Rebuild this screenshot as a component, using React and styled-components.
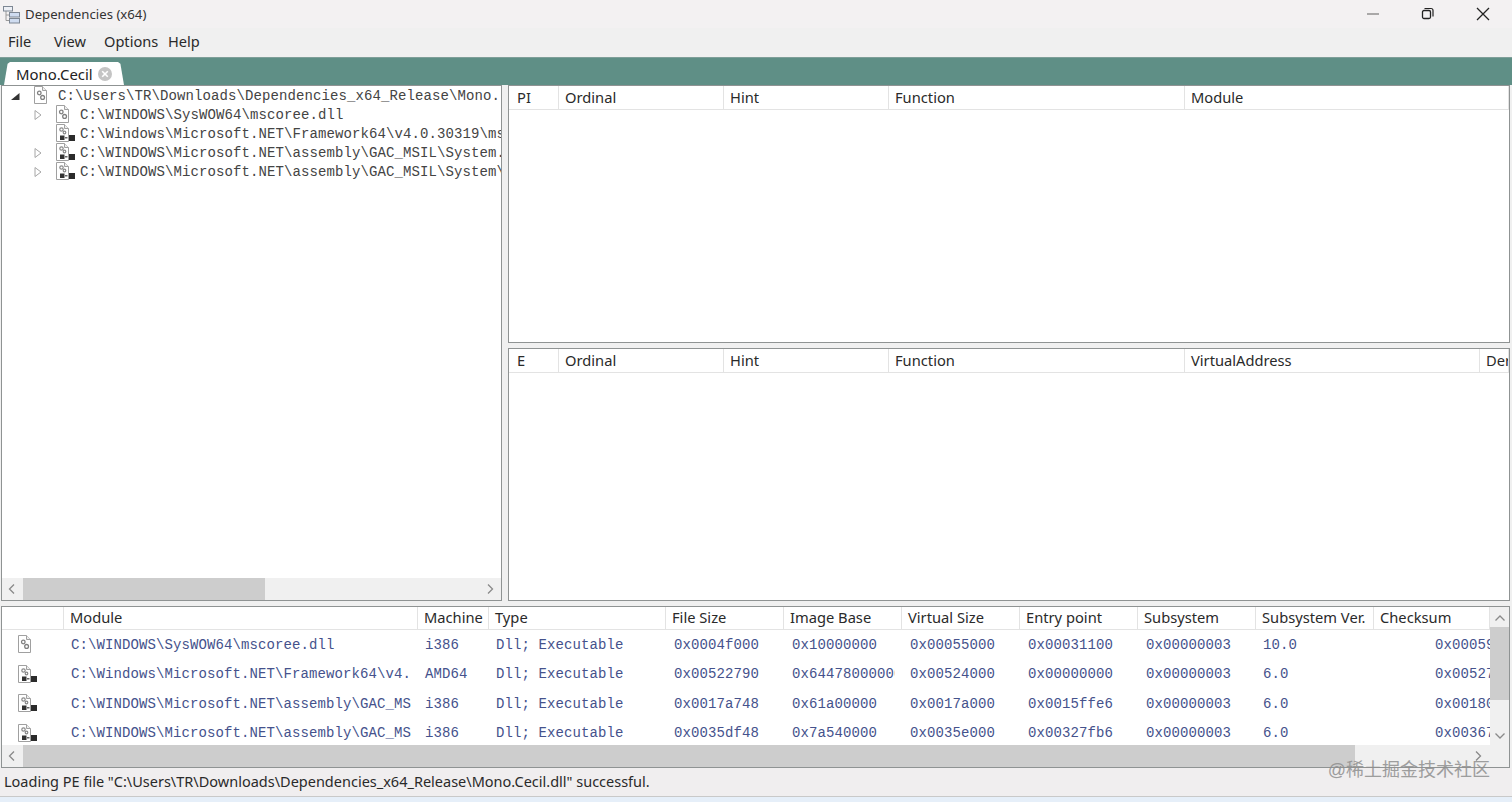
import React from "react";
import styled, { createGlobalStyle } from "styled-components";

const GlobalStyle = createGlobalStyle`
  html, body {
    margin: 0;
    padding: 0;
    width: 1512px;
    height: 802px;
    overflow: hidden;
    background: #f0f0f0;
    font-family: "Noto Sans", "Open Sans", sans-serif;
    color: #1e1e1e;
  }
`;

const Window = styled.div`
  width: 1512px;
  height: 802px;
  display: flex;
  flex-direction: column;
  position: relative;
  background: #f0f0f0;
`;

const TitleBar = styled.div`
  height: 28px;
  display: flex;
  align-items: center;
  padding-left: 2px;
  gap: 4px;
  background: #f3f1f2;
`;
const AppTitle = styled.div`
  flex: 1;
  font-size: 13.2px;
  color: #333;
`;
const WindowButtons = styled.div`
  display: flex;
  align-items: center;
  gap: 35px;
  padding-right: 19px;
`;
const WindowButton = styled.svg`
  width: 20px;
  height: 14px;
  display: block;
`;

const MenuBar = styled.div`
  height: 29px;
  box-sizing: border-box;
  padding: 0 0 4px 8px;
  display: flex;
  align-items: center;
  font-size: 14.6px;
  background: #f0f0f0;
  color: #2a2a2a;
`;
const MenuItem = styled.div`
  width: ${(p) => p.$width}px;
`;

const TabStrip = styled.div`
  height: 28px;
  background: #5f8f86;
  border-top: 1px solid #7f9f99;
  box-sizing: border-box;
  display: flex;
  align-items: flex-end;
  padding-left: 4px;
`;
const Tab = styled.div`
  width: 120px;
  height: 23px;
  box-sizing: border-box;
  background: #fff;
  border-radius: 5px 5px 0 0;
  clip-path: polygon(0 100%, 3% 8%, 5% 0, 95% 0, 97% 8%, 100% 100%);
  display: flex;
  align-items: center;
  padding-left: 12px;
  gap: 5px;
  font-size: 14.9px;
  color: #222;
`;
const TabClose = styled.svg`
  width: 14px;
  height: 14px;
  display: block;
`;

const Content = styled.div`
  height: 683px;
  display: flex;
  flex-direction: column;
  gap: 5px;
  padding: 0 2px 0 2px;
  box-sizing: border-box;
  background: #f0f0f0;
`;
const UpperArea = styled.div`
  height: 516px;
  display: flex;
  gap: 6px;
`;
const Pane = styled.div`
  box-sizing: border-box;
  background: #fff;
  border: 1px solid #8f9393;
  display: flex;
  flex-direction: column;
  overflow: hidden;
`;
const TreePane = styled(Pane)`
  width: 501px;
  margin-left: -1px;
`;
const RightColumn = styled.div`
  flex: 1;
  display: flex;
  flex-direction: column;
  gap: 5px;
  min-width: 0;
`;
const ImportsPane = styled(Pane)`
  height: 258px;
`;
const ExportsPane = styled(Pane)`
  flex: 1;
`;
const ModulesPane = styled(Pane)`
  flex: 1;
  margin-left: -1px;
  position: relative;
`;

const TreeBody = styled.div`
  flex: 1;
  overflow: hidden;
`;
const TreeRow = styled.div`
  height: 19px;
  display: flex;
  align-items: center;
  padding-left: ${(p) => p.$indent}px;
  white-space: nowrap;
  overflow: hidden;
`;
const Arrow = styled.svg`
  width: 12px;
  height: 12px;
  flex: none;
  display: block;
`;
const ArrowSlot = styled.div`
  width: 12px;
  flex: none;
`;
const FileIcon = styled.svg`
  flex: none;
  display: block;
  width: 20px;
  height: 19px;
  margin-left: ${(p) => p.$gap || 0}px;
`;
const PathText = styled.span`
  font-family: "Liberation Mono", monospace;
  font-size: 14px;
  letter-spacing: 0.1px;
  color: #444;
  margin-left: ${(p) => p.$gap}px;
`;

const HeaderRow = styled.div`
  height: ${(p) => p.$height}px;
  line-height: ${(p) => p.$height - 2}px;
  flex: none;
  display: grid;
  grid-template-columns: ${(p) => p.$columns};
  border-bottom: 1px solid #e3e3e3;
  box-sizing: border-box;
  background: #fff;
  overflow: hidden;
`;
const HeaderCell = styled.div`
  font-size: 14.7px;
  padding-left: ${(p) => (p.$wide ? 6 : 8)}px;
  color: #2a2a2a;
  border-right: 1px solid #e3e3e3;
  white-space: nowrap;
  overflow: hidden;
  box-sizing: border-box;
`;

const ModulesMain = styled.div`
  flex: 1;
  display: flex;
  min-height: 0;
`;
const ModulesTable = styled.div`
  flex: 1;
  min-width: 0;
  display: flex;
  flex-direction: column;
  overflow: hidden;
`;
const DataRow = styled.div`
  height: 29.5px;
  flex: none;
  display: grid;
  grid-template-columns: ${(p) => p.$columns};
  align-items: center;
`;
const DataCell = styled.div`
  font-family: "Liberation Mono", monospace;
  font-size: 14px;
  letter-spacing: 0.1px;
  color: #45528c;
  padding-left: ${(p) => (p.$tight ? 7 : 8)}px;
  white-space: nowrap;
  overflow: hidden;
  box-sizing: border-box;
`;
const ClippedCell = styled(DataCell)`
  margin-right: 7px;
`;
const ChecksumCell = styled(DataCell)`
  padding-left: 61px;
`;
const IconCell = styled.div`
  display: flex;
  justify-content: center;
  padding-right: 12px;
`;

const HScroll = styled.div`
  height: 22px;
  flex: none;
  background: #f0f0f0;
  position: relative;
`;
const HThumb = styled.div`
  position: absolute;
  left: ${(p) => p.$left}px;
  top: 0;
  bottom: 0;
  width: ${(p) => p.$width}px;
  background: #cdcdcd;
`;
const ScrollArrow = styled.svg`
  width: 10px;
  height: 12px;
  display: block;
  position: absolute;
  top: 5px;
  ${(p) => (p.$right ? `right: ${p.$right}px;` : `left: ${p.$left}px;`)}
`;
const VScroll = styled.div`
  width: 19px;
  flex: none;
  background: #f0f0f0;
  position: relative;
`;
const VThumb = styled.div`
  position: absolute;
  left: 0;
  right: 0;
  top: 20px;
  height: 73px;
  background: #cdcdcd;
`;
const VArrow = styled.svg`
  position: absolute;
  left: 4px;
  width: 12px;
  height: 10px;
  display: block;
  ${(p) => (p.$down ? "bottom: 4px;" : "top: 6px;")}
`;

const StatusBar = styled.div`
  height: 28px;
  box-sizing: border-box;
  padding: 0 0 3px 4px;
  display: flex;
  align-items: center;
  font-size: 14.5px;
  color: #2a2a2a;
  background: #f0eeef;
`;
const Watermark = styled.div`
  position: absolute;
  right: 22px;
  top: 755px;
  font-family: "Liberation Sans", "Noto Sans CJK SC", sans-serif;
  font-size: 18px;
  color: #8f8f8f;
  opacity: 0.85;
`;
const Taskbar = styled.div`
  flex: 1;
  background: #e6eff9;
  border-top: 1px solid #c9c9c9;
`;

const Doc = ({ linked }) => (
  <>
    <path d="M1.5 0.5 H9.5 L13.5 4.5 V17.5 H1.5 Z" fill="#fff" stroke="#a0a0a0" />
    <path d="M9.5 0.5 V4.5 H13.5" fill="#eee" stroke="#a0a0a0" />
    {linked ? (
      <>
        <g fill="none" stroke="#8a8a8a" strokeWidth="1.2">
          <circle cx="6.5" cy="5.5" r="1.7" />
          <circle cx="9.5" cy="8.5" r="1.3" />
        </g>
        <rect x="5" y="11.5" width="4.5" height="4.5" fill="#333" />
        <path d="M10 13 h2.5 v1.5 h-2.5 Z" fill="#666" />
        <rect x="14" y="11" width="6" height="6" fill="#2b2b2b" />
      </>
    ) : (
      <g fill="none" stroke="#808080" strokeWidth="1.3">
        <circle cx="6.3" cy="7" r="1.8" />
        <circle cx="9.6" cy="11.4" r="1.9" />
      </g>
    )}
  </>
);

const ModuleIcon = ({ linked, gap }) => (
  <FileIcon viewBox="0 0 20 19" $gap={gap}>
    <Doc linked={linked} />
  </FileIcon>
);

const CollapsedArrow = () => (
  <Arrow viewBox="0 0 12 12">
    <path d="M3 1.5 L9 6 L3 10.5 Z" fill="#fff" stroke="#a6a6a6" />
  </Arrow>
);
const ExpandedArrow = () => (
  <Arrow viewBox="0 0 12 12">
    <path d="M10.5 3 V10 H2 Z" fill="#333" />
  </Arrow>
);

const ChevronLeft = ({ left }) => (
  <ScrollArrow viewBox="0 0 10 12" $left={left}>
    <path d="M7 1.5 L2.5 6 L7 10.5" fill="none" stroke="#8a8a8a" strokeWidth="1.3" />
  </ScrollArrow>
);
const ChevronRight = ({ right }) => (
  <ScrollArrow viewBox="0 0 10 12" $right={right}>
    <path d="M3 1.5 L7.5 6 L3 10.5" fill="none" stroke="#8a8a8a" strokeWidth="1.3" />
  </ScrollArrow>
);

const treeChildren = [
  { path: "C:\\WINDOWS\\SysWOW64\\mscoree.dll", arrow: true },
  { path: "C:\\Windows\\Microsoft.NET\\Framework64\\v4.0.30319\\ms", linked: true },
  { path: "C:\\WINDOWS\\Microsoft.NET\\assembly\\GAC_MSIL\\System.", arrow: true, linked: true },
  { path: "C:\\WINDOWS\\Microsoft.NET\\assembly\\GAC_MSIL\\System\\", arrow: true, linked: true },
];

const IMPORT_COLUMNS = "50px 165px 165px 296px 1fr";
const EXPORT_COLUMNS = "50px 165px 165px 296px 295px 1fr";
const MODULE_COLUMNS =
  "62px 354px 71px 177px 118px 118px 118px 118px 118px 118px 116px";

const moduleRows = [
  ["C:\\WINDOWS\\SysWOW64\\mscoree.dll", "i386", "0x0004f000", "0x10000000", "0x00055000", "0x00031100", "10.0", "0x00059"],
  ["C:\\Windows\\Microsoft.NET\\Framework64\\v4.", "AMD64", "0x00522790", "0x644780000000", "0x00524000", "0x00000000", "6.0", "0x00527"],
  ["C:\\WINDOWS\\Microsoft.NET\\assembly\\GAC_MS", "i386", "0x0017a748", "0x61a00000", "0x0017a000", "0x0015ffe6", "6.0", "0x00180"],
  ["C:\\WINDOWS\\Microsoft.NET\\assembly\\GAC_MS", "i386", "0x0035df48", "0x7a540000", "0x0035e000", "0x00327fb6", "6.0", "0x00367"],
];

const moduleHeaders = [
  "",
  "Module",
  "Machine",
  "Type",
  "File Size",
  "Image Base",
  "Virtual Size",
  "Entry point",
  "Subsystem",
  "Subsystem Ver.",
  "Checksum",
];

const TableHeader = ({ columns, labels, height = 24 }) => (
  <HeaderRow $columns={columns} $height={height}>
    {labels.map((label, i) => (
      <HeaderCell key={i} $wide={i > 0}>
        {label}
      </HeaderCell>
    ))}
  </HeaderRow>
);

const App = () => {
  return (
    <Window>
      <GlobalStyle />
      <TitleBar>
        <svg width="19" height="20" viewBox="0 0 19 20">
          <path d="M4 7 V16.5 H7 M4 11 H7" fill="none" stroke="#9a9a9a" />
          <g stroke="#7d8794">
            <rect x="1.5" y="2.5" width="9" height="4.5" fill="#eceff5" />
            <rect x="7.5" y="8.5" width="10" height="4.5" fill="#cfdcf0" />
            <rect x="7.5" y="14.5" width="10" height="4.5" fill="#cfdcf0" />
          </g>
        </svg>
        <AppTitle>Dependencies (x64)</AppTitle>
        <WindowButtons>
          <WindowButton viewBox="0 0 20 14">
            <path d="M4 7 H16" stroke="#888" strokeWidth="1.4" />
          </WindowButton>
          <WindowButton viewBox="0 0 20 14">
            <rect x="4.5" y="3.5" width="8" height="8" rx="1.5" fill="none" stroke="#222" strokeWidth="1.3" />
            <path d="M6.5 1.5 H13 a2 2 0 0 1 2 2 V9.5" fill="none" stroke="#222" strokeWidth="1.2" />
          </WindowButton>
          <WindowButton viewBox="0 0 20 14">
            <path d="M4 1 L16 13 M16 1 L4 13" stroke="#222" strokeWidth="1.3" />
          </WindowButton>
        </WindowButtons>
      </TitleBar>

      <MenuBar>
        <MenuItem $width={46}>File</MenuItem>
        <MenuItem $width={50}>View</MenuItem>
        <MenuItem $width={64}>Options</MenuItem>
        <MenuItem $width={40}>Help</MenuItem>
      </MenuBar>

      <TabStrip>
        <Tab>
          Mono.Cecil
          <TabClose viewBox="0 0 14 14">
            <circle cx="7" cy="7" r="7" fill="#c4c4c4" />
            <path d="M4.2 4.2 L9.8 9.8 M9.8 4.2 L4.2 9.8" stroke="#fff" strokeWidth="1.6" />
          </TabClose>
        </Tab>
      </TabStrip>

      <Content>
        <UpperArea>
          <TreePane>
            <TreeBody>
              <TreeRow $indent={7}>
                <ExpandedArrow />
                <ModuleIcon gap={12} />
                <PathText $gap={5}>
                  C:\Users\TR\Downloads\Dependencies_x64_Release\Mono.
                </PathText>
              </TreeRow>
              {treeChildren.map((item) => (
                <TreeRow key={item.path} $indent={30}>
                  {item.arrow ? <CollapsedArrow /> : <ArrowSlot />}
                  <ModuleIcon linked={item.linked} gap={11} />
                  <PathText $gap={5}>{item.path}</PathText>
                </TreeRow>
              ))}
            </TreeBody>
            <HScroll>
              <HThumb $left={21} $width={242} />
              <ChevronLeft left={5} />
              <ChevronRight right={6} />
            </HScroll>
          </TreePane>

          <RightColumn>
            <ImportsPane>
              <TableHeader
                columns={IMPORT_COLUMNS}
                labels={["PI", "Ordinal", "Hint", "Function", "Module"]}
              />
            </ImportsPane>
            <ExportsPane>
              <TableHeader
                columns={EXPORT_COLUMNS}
                labels={["E", "Ordinal", "Hint", "Function", "VirtualAddress", "Der"]}
              />
            </ExportsPane>
          </RightColumn>
        </UpperArea>

        <ModulesPane>
          <ModulesMain>
            <ModulesTable>
              <TableHeader columns={MODULE_COLUMNS} labels={moduleHeaders} height={23} />
              {moduleRows.map((row, i) => (
                <DataRow key={i} $columns={MODULE_COLUMNS}>
                  <IconCell>
                    <ModuleIcon linked={i > 0} />
                  </IconCell>
                  <DataCell $tight>{row[0]}</DataCell>
                  <DataCell $tight>{row[1]}</DataCell>
                  <DataCell $tight>Dll; Executable</DataCell>
                  <DataCell>{row[2]}</DataCell>
                  <ClippedCell>{row[3]}</ClippedCell>
                  <DataCell>{row[4]}</DataCell>
                  <DataCell>{row[5]}</DataCell>
                  <DataCell>0x00000003</DataCell>
                  <DataCell $tight>{row[6]}</DataCell>
                  <ChecksumCell>{row[7]}</ChecksumCell>
                </DataRow>
              ))}
            </ModulesTable>
            <VScroll>
              <VThumb />
              <VArrow viewBox="0 0 12 10">
                <path d="M1.5 7.5 L6 3 L10.5 7.5" fill="none" stroke="#8a8a8a" strokeWidth="1.3" />
              </VArrow>
              <VArrow viewBox="0 0 12 10" $down>
                <path d="M1.5 2.5 L6 7 L10.5 2.5" fill="none" stroke="#8a8a8a" strokeWidth="1.3" />
              </VArrow>
            </VScroll>
          </ModulesMain>
          <HScroll>
            <HThumb $left={21} $width={1332} />
            <ChevronLeft left={5} />
            <ChevronRight right={26} />
          </HScroll>
        </ModulesPane>
      </Content>

      <StatusBar>
        Loading PE file "C:\Users\TR\Downloads\Dependencies_x64_Release\Mono.Cecil.dll" successful.
      </StatusBar>
      <Taskbar />
      <Watermark>@稀土掘金技术社区</Watermark>
    </Window>
  );
};

export default App;
